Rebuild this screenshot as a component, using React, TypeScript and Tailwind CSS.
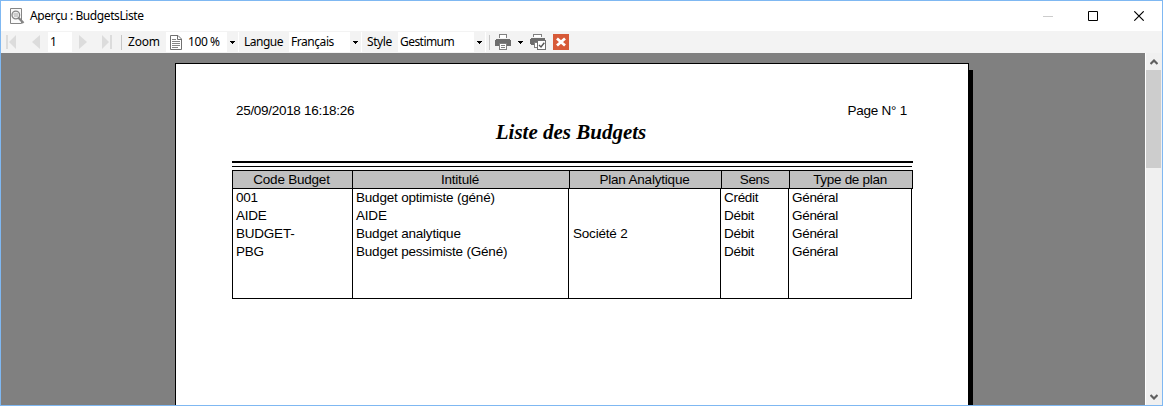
import React from "react";

const columns = [
  { title: "Code Budget", head: "w-[120px]", body: "w-[120px]", pad: "pl-[3px]", spacing: "tracking-[-0.22px]" },
  { title: "Intitulé", head: "w-[217px]", body: "w-[216px]", pad: "pl-[3px]", spacing: "tracking-[-0.2px]" },
  { title: "Plan Analytique", head: "w-[152px]", body: "w-[152px]", pad: "pl-[4px]", spacing: "tracking-[-0.2px]" },
  { title: "Sens", head: "w-[68px]", body: "w-[68px]", pad: "pl-[3px]", spacing: "tracking-[-0.3px]" },
  { title: "Type de plan", head: "w-[123px]", body: "w-[123px]", pad: "pl-[3px]", spacing: "tracking-[-0.3px]" },
];

const rows = [
  ["001", "Budget optimiste (géné)", "", "Crédit", "Général"],
  ["AIDE", "AIDE", "", "Débit", "Général"],
  ["BUDGET-", "Budget analytique", "Société 2", "Débit", "Général"],
  ["PBG", "Budget pessimiste (Géné)", "", "Débit", "Général"],
];

function DropArrow() {
  return (
    <svg width="5" height="3" viewBox="0 0 5 3" shapeRendering="crispEdges" className="block shrink-0">
      <path d="M0 0h5v1h-5zM1 1h3v1h-3zM2 2h1v1h-1z" />
    </svg>
  );
}

function DropButton() {
  return (
    <span className="flex h-[20px] w-[11px] shrink-0 items-center justify-center bg-[#f3f3f3]">
      <DropArrow />
    </span>
  );
}

function Combo({ className, label, children }: { className: string; label: string; children?: React.ReactNode }) {
  return (
    <div className={`flex h-[20px] shrink-0 items-center bg-white pr-px ${className}`}>
      {children}
      <span className="flex-1 whitespace-nowrap">{label}</span>
      <DropButton />
    </div>
  );
}

function Printer() {
  return (
    <svg width="16" height="16" viewBox="0 0 16 16" className="block shrink-0" shapeRendering="crispEdges">
      <path d="M4.500 4V.5h7V4" fill="#fff" stroke="#808080" />
      <path d="M1 5h14v1h1v6h-16V6h1z" fill="#6d6d6d" />
      <path d="M4.500 9.500h7v6h-7z" fill="#fff" stroke="#808080" />
      <path d="M6 11.500h4M6 13.500h4" stroke="#808080" />
    </svg>
  );
}

function PrinterCheck() {
  return (
    <svg width="16" height="16" viewBox="0 0 16 16" className="block shrink-0" shapeRendering="crispEdges">
      <path d="M3.500 3V.5h8V3" fill="#fff" stroke="#808080" />
      <path d="M1 4h14v2H7v5H1v-1H0V5h1z" fill="#6d6d6d" />
      <path d="M4 8h3v1H5v4h2v1H4z" fill="#808080" />
      <path d="M5 9h2v4H5z" fill="#fff" />
      <path d="M7.500 6.500h8v9h-8z" fill="#fff" stroke="#707070" />
      <path d="M9 11l2 2L14.300 8.800" fill="none" stroke="#555" strokeWidth="1.400" shapeRendering="auto" />
    </svg>
  );
}

function PreviewIcon() {
  return (
    <svg width="16" height="17" viewBox="0 0 16 17" className="block shrink-0">
      <path d="M1.500.5h11v15h-11z" fill="#fafafa" stroke="#858585" />
      <circle cx="6.800" cy="7" r="3.800" fill="#f0f0f0" stroke="#858585" strokeWidth="1.300" />
      <path d="M4.500 6h4.500M5 8h4" stroke="#aaa" />
      <path d="M9.500 9.800l5 5.200" stroke="#858585" strokeWidth="2.300" />
    </svg>
  );
}

function PageIcon() {
  return (
    <svg width="12" height="15" viewBox="0 0 12 15" className="block shrink-0">
      <path d="M.5.5h7.500l3.500 3.500v10.500H.5z" fill="#fff" stroke="#707070" />
      <path d="M7.500.5V4.500h4" fill="none" stroke="#707070" />
      <path d="M2 4.500h4M2 6.500h8M2 8.500h8M2 10.500h8M2 12.500h6" stroke="#858585" />
    </svg>
  );
}

function TitleBar() {
  return (
    <div className="flex h-[30px] shrink-0 items-center bg-white pl-[8px]">
      <PreviewIcon />
      <span className="ml-[5px] tracking-[-0.41px]">Aperçu : BudgetsListe</span>
      <svg width="102" height="10" viewBox="0 0 102 10" className="ml-auto mr-[17px] block" fill="none">
        <path d="M0 5.500h10" stroke="#ccc" />
        <path d="M45.500.5h9v9h-9z" stroke="#000" />
        <path d="M91.300.3l9.400 9.400M100.700.3l-9.400 9.400" stroke="#000" strokeWidth="1.100" />
      </svg>
    </div>
  );
}

function Toolbar() {
  return (
    <div className="flex h-[22px] shrink-0 items-center bg-[#f3f3f3] pl-[5px]">
      <svg width="10" height="14" viewBox="0 0 10 14" className="block shrink-0" fill="#dcdcdc">
        <path d="M0 0h2v14H0zM10 0v14L3 7z" />
      </svg>
      <svg width="8" height="14" viewBox="0 0 8 14" className="ml-[16px] block shrink-0" fill="#dcdcdc">
        <path d="M8 0v14L0 7z" />
      </svg>
      <span className="ml-[8px] flex h-[20px] w-[24px] shrink-0 items-center bg-white pl-[2px]">1</span>
      <svg width="8" height="14" viewBox="0 0 8 14" className="ml-[7px] block shrink-0" fill="#dcdcdc">
        <path d="M0 0v14l8-7z" />
      </svg>
      <svg width="10" height="14" viewBox="0 0 10 14" className="ml-[15px] block shrink-0" fill="#dcdcdc">
        <path d="M0 0v14l7-7zM8 0h2v14H8z" />
      </svg>
      <span className="ml-[9px] h-[15px] w-px shrink-0 bg-[#c6c6c6]" />
      <span className="ml-[6px] w-[38px] shrink-0 tracking-[-0.2px]">Zoom</span>
      <Combo label="100 %" className="w-[73px] gap-[6px] pl-[4px] tracking-[-0.4px]">
        <PageIcon />
      </Combo>
      <span className="ml-[5px] w-[45px] shrink-0 tracking-[-0.5px]">Langue</span>
      <Combo label="Français" className="w-[73px] pl-[2px] tracking-[-0.45px]" />
      <span className="ml-[5px] w-[31px] shrink-0 tracking-[-0.4px]">Style</span>
      <Combo label="Gestimum" className="w-[88px] pl-[2px] tracking-[-0.55px]" />
      <span className="ml-[3px] h-[15px] w-px shrink-0 bg-[#c6c6c6]" />
      <span className="ml-[5px]">
        <Printer />
      </span>
      <span className="ml-[7px]">
        <DropArrow />
      </span>
      <span className="ml-[7px]">
        <PrinterCheck />
      </span>
      <svg width="16" height="16" viewBox="0 0 16 16" className="ml-[7px] block shrink-0">
        <path d="M0 0h16v16H0z" fill="#d75a38" />
        <path d="M4 4.500l8 7M12 4.500l-8 7" stroke="#fff" strokeWidth="2.800" />
      </svg>
    </div>
  );
}

function ReportTable() {
  return (
    <div className="w-[681px]">
      <div className="h-[2px] bg-black" />
      <div className="mt-[3px] h-px w-[680px] bg-black" />
      <div className="mt-[3px] flex h-[19px] border border-black bg-[#c0c0c0]">
        {columns.map((c, i) => (
          <div
            key={c.title}
            className={`flex shrink-0 items-center justify-center pr-[2px] ${i === 4 ? "w-[122px]" : `border-r border-black ${c.head}`} ${c.spacing}`}
          >
            {c.title}
          </div>
        ))}
      </div>
      <div className="flex h-[110px] w-[680px] border-b border-l border-black">
        {columns.map((c, i) => (
          <div key={c.title} className={`shrink-0 border-r border-black ${c.body} ${c.pad} ${c.spacing}`}>
            {rows.map((r) => (
              <div key={r[0]} className="h-[18px] whitespace-nowrap leading-[18px]">
                {r[i]}
              </div>
            ))}
          </div>
        ))}
      </div>
    </div>
  );
}

function Report() {
  return (
    <div className="flex h-[342px] w-[794px] shrink-0 flex-col border border-b-0 border-black bg-white pl-[56px] font-['Liberation_Sans',Arial,sans-serif] text-[13.5px]">
      <div className="mt-[39px] flex h-[16px] justify-between pl-[4px] pr-[61px] leading-[16px] tracking-[-0.3px]">
        <span>25/09/2018 16:18:26</span>
        <span className="tracking-[-0.25px]">Page N° 1</span>
      </div>
      <h1 className="mb-[16px] h-[26px] w-[678px] text-center font-['Liberation_Serif','Times_New_Roman',serif] text-[21px] font-bold italic leading-[26px]">
        Liste des Budgets
      </h1>
      <ReportTable />
    </div>
  );
}

function Scrollbar() {
  return (
    <div className="flex w-[17px] shrink-0 flex-col border-l border-white bg-[#f0f0f0]">
      <div className="flex h-[17px] items-center pl-[4px]">
        <svg width="8" height="6" viewBox="0 0 8 6" className="block" fill="none">
          <path d="M.5 5L4 1.500 7.500 5" stroke="#606060" strokeWidth="2.200" />
        </svg>
      </div>
      <div className="h-[98px] w-[15px] bg-[#cdcdcd]" />
      <div className="mt-auto flex h-[17px] items-center pl-[4px]">
        <svg width="8" height="6" viewBox="0 0 8 6" className="block" fill="none">
          <path d="M.5 1L4 4.500 7.500 1" stroke="#606060" strokeWidth="2.200" />
        </svg>
      </div>
    </div>
  );
}

export default function App() {
  return (
    <div className="flex h-[406px] w-[1163px] flex-col overflow-hidden border border-[#7fb8f2] bg-white font-['Noto_Sans',sans-serif] text-[12px] leading-[16px] text-black">
      <TitleBar />
      <Toolbar />
      <div className="flex h-[352px] bg-[#808080]">
        <div className="flex flex-1 overflow-hidden pl-[174px] pt-[10px]">
          <Report />
          <div className="mt-[7px] w-[4px] bg-black" />
        </div>
        <Scrollbar />
      </div>
    </div>
  );
}
